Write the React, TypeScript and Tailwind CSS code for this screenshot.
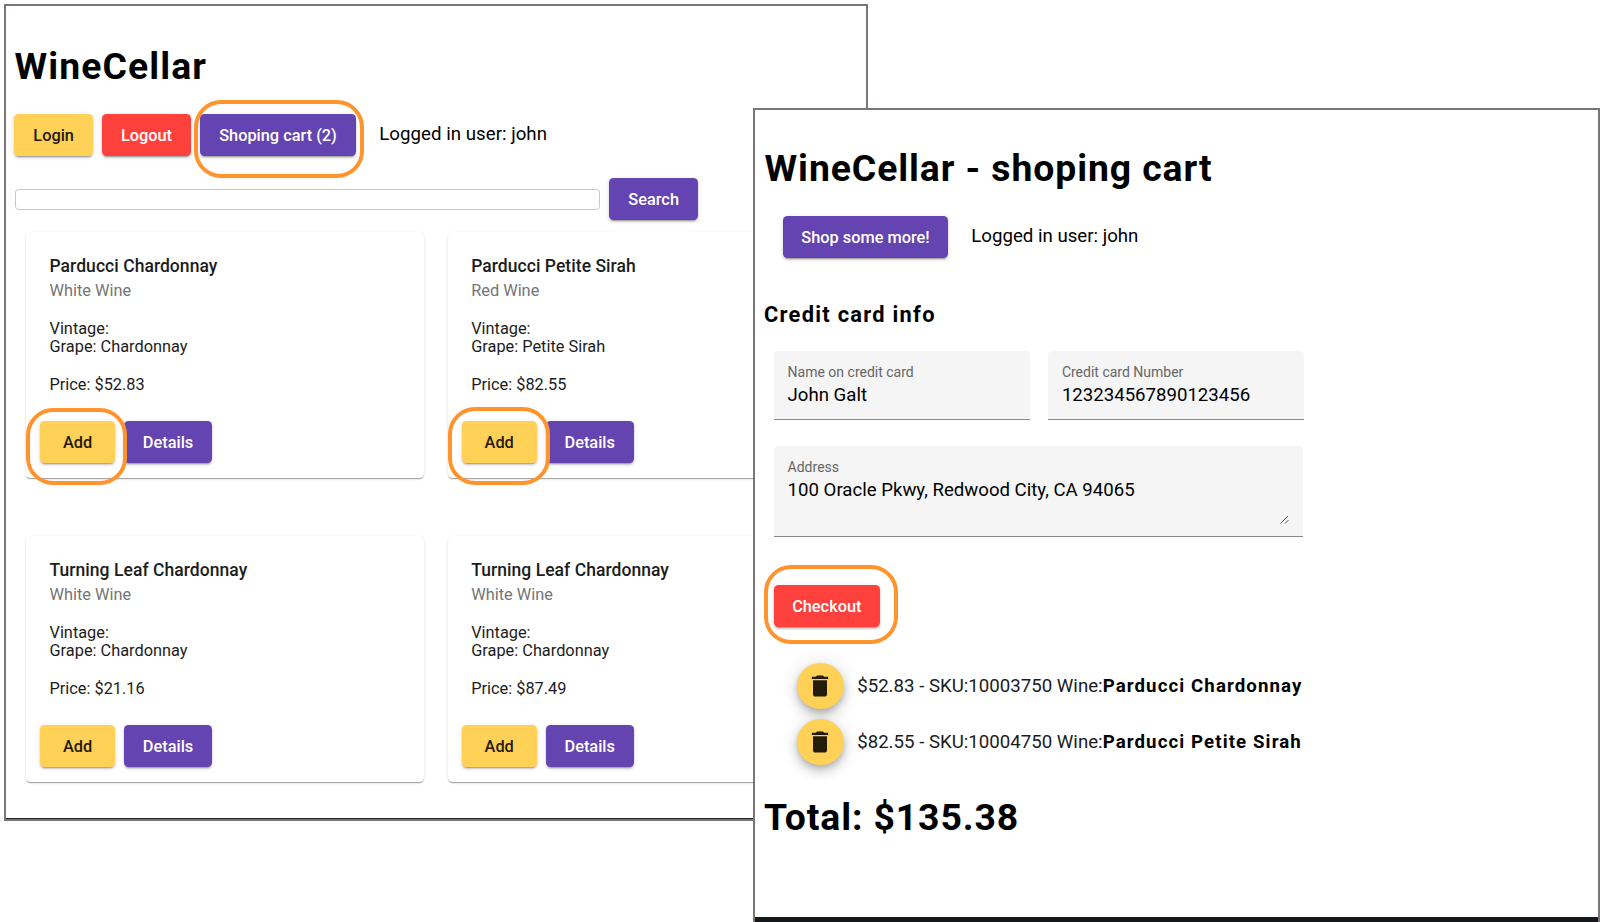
import React from "react";

type Tone = "yellow" | "red" | "purple";

const tones: Record<Tone, string> = {
  yellow: "bg-[#ffd257] text-[#1f1a0a]",
  red: "bg-[#ff413d] text-white",
  purple: "bg-[#6344b0] text-white",
};

function Button({ tone, className, children }: { tone: Tone; className: string; children: React.ReactNode }) {
  return (
    <button
      className={`flex h-[42px] shrink-0 items-center justify-center rounded-[4.5px] pt-[2px] text-[16.33px] font-medium whitespace-nowrap shadow-[0_3px_1px_-2px_rgba(0,0,0,.2),0_2px_2px_0_rgba(0,0,0,.14),0_1px_5px_0_rgba(0,0,0,.12)] ${tones[tone]} ${className}`}
    >
      {children}
    </button>
  );
}

function Highlight({ className }: { className: string }) {
  return <div className={`pointer-events-none absolute z-10 rounded-[27px] border-4 border-[#ff942e] ${className}`} />;
}

interface Wine {
  name: string;
  type: string;
  grape: string;
  price: string;
  mark?: string;
}

const wines: Wine[] = [
  { name: "Parducci Chardonnay", type: "White Wine", grape: "Chardonnay", price: "$52.83", mark: "left-0 top-[176px] h-[77px] w-[101px]" },
  { name: "Parducci Petite Sirah", type: "Red Wine", grape: "Petite Sirah", price: "$82.55", mark: "left-0 top-[175px] h-[78px] w-[102px]" },
  { name: "Turning Leaf Chardonnay", type: "White Wine", grape: "Chardonnay", price: "$21.16" },
  { name: "Turning Leaf Chardonnay", type: "White Wine", grape: "Chardonnay", price: "$87.49" },
];

function WineCard({ wine }: { wine: Wine }) {
  return (
    <div className="relative flex h-[246px] w-[398px] flex-col rounded-[4.5px] bg-white pt-[22px] text-[16.33px] text-[#1c1c1c] shadow-[0_2px_1px_-1px_rgba(0,0,0,.2),0_1px_1px_0_rgba(0,0,0,.14),0_1px_3px_0_rgba(0,0,0,.12)]">
      <div className="px-[23.5px]">
        <h2 className="h-6 text-[17.5px] leading-6 font-medium tracking-[0.05px]">{wine.name}</h2>
        <p className="mt-[2px] h-[22px] leading-[22px] text-[#757575]">{wine.type}</p>
        <p className="mt-[17px] h-[19px] leading-[19px]">Vintage:</p>
        <p className="h-[18px] leading-[18px]">Grape: {wine.grape}</p>
        <p className="mt-[19px] h-[19px] leading-[19px]">Price: {wine.price}</p>
      </div>
      <div className="mt-[27px] flex gap-[9.2px] pl-[14px]">
        <Button tone="yellow" className="w-[75px]">Add</Button>
        <Button tone="purple" className="w-[87.7px]">Details</Button>
      </div>
      {wine.mark && <Highlight className={wine.mark} />}
    </div>
  );
}

function Field({ label, value, className, children }: { label: string; value: string; className: string; children?: React.ReactNode }) {
  return (
    <div className={`relative rounded-t-[4.5px] border-b border-[#8a8a8a] bg-[#f5f5f5] pt-[13px] pl-[13.8px] ${className}`}>
      <div className="h-4 text-[14px] leading-4 text-[#666]">{label}</div>
      <div className="mt-[3px] h-6 text-[18.62px] leading-6 text-black">{value}</div>
      {children}
    </div>
  );
}

const items = [
  { text: "$52.83 - SKU:10003750 Wine:", name: "Parducci Chardonnay" },
  { text: "$82.55 - SKU:10004750 Wine:", name: "Parducci Petite Sirah" },
];

function TrashButton() {
  return (
    <button className="flex size-[46.67px] shrink-0 items-center justify-center rounded-full bg-[#ffd257] shadow-[0_3px_6px_-1px_rgba(0,0,0,.2),0_7px_12px_0_rgba(0,0,0,.14),0_1px_20px_0_rgba(0,0,0,.12)]">
      <svg viewBox="0 0 24 24" className="size-7 fill-[#231c0b]">
        <path d="M6 19c0 1.1.9 2 2 2h8c1.1 0 2-.9 2-2V7H6v12zM19 4h-3.5l-1-1h-5l-1 1H5v2h14V4z" />
      </svg>
    </button>
  );
}

function StoreWindow() {
  return (
    <section className="absolute top-1 left-1 h-[817px] w-[863.5px] overflow-hidden border-2 border-[#7b7577] bg-white">
      <div className="flex h-full flex-col border-b border-[#222]">
        <h1 className="mt-[38px] h-11 pl-[8.5px] text-[37.33px] leading-[44px] font-bold tracking-[1.1px]">WineCellar</h1>
        <div className="relative mt-[26px] flex items-center pl-[8.3px]">
          <Button tone="yellow" className="w-[78.7px]">Login</Button>
          <Button tone="red" className="ml-[9px] w-[89px]">Logout</Button>
          <Button tone="purple" className="ml-[9px] w-[156px]">Shoping cart (2)</Button>
          <span className="ml-[23.3px] pb-[2px] text-[18.67px] leading-10 tracking-[0.03px]">Logged in user: john</span>
          <Highlight className="-top-[14px] left-[187.5px] h-[78px] w-[170.5px]" />
        </div>
        <div className="mt-[22px] flex items-center pl-[9px]">
          <input className="h-[21px] w-[585px] rounded-[3.5px] border border-[#c6c6c6] bg-white" />
          <Button tone="purple" className="ml-[9.3px] w-[88.7px]">Search</Button>
        </div>
        <div className="mt-3 grid grid-cols-[398px_398px] gap-x-[23.7px] gap-y-[58.3px] pl-5">
          {wines.map((w, i) => (
            <WineCard key={i} wine={w} />
          ))}
        </div>
      </div>
    </section>
  );
}

function CartWindow() {
  return (
    <section className="absolute top-[108px] left-[753px] z-20 h-[814px] w-[847px] border-2 border-b-0 border-[#7b7577] bg-white">
      <div className="flex h-full flex-col border-b-[5px] border-[#14181d] pl-[9px]">
        <h1 className="mt-[36px] h-11 pl-[0.5px] text-[37.33px] leading-[44px] font-bold tracking-[0.92px]">WineCellar - shoping cart</h1>
        <div className="mt-[26px] flex items-center pl-[19px]">
          <Button tone="purple" className="w-[165px]">Shop some more!</Button>
          <span className="ml-[23.3px] pb-[2px] text-[18.67px] leading-10">Logged in user: john</span>
        </div>
        <h3 className="mt-[43px] h-7 text-[21.84px] leading-7 font-bold tracking-[1.27px]">Credit card info</h3>
        <div className="mt-[22px] flex gap-[18.3px] pl-[9.8px]">
          <Field label="Name on credit card" value="John Galt" className="h-[69px] w-[256px]" />
          <Field label="Credit card Number" value="123234567890123456" className="h-[69px] w-[256px]" />
        </div>
        <div className="mt-[26px] pl-[9.8px]">
          <Field label="Address" value="100 Oracle Pkwy, Redwood City, CA 94065" className="h-[91px] w-[529px]">
            <svg viewBox="0 0 9 9" className="absolute right-[14px] bottom-[12px] size-[9px] fill-none stroke-[#555]">
              <path d="M0.5 8.5L8 1M5 8.5L8.5 5" />
            </svg>
          </Field>
        </div>
        <div className="relative mt-12 pl-[9.8px]">
          <Button tone="red" className="w-[106px]">Checkout</Button>
          <Highlight className="-top-5 left-0 h-[79px] w-[134px]" />
        </div>
        <ul className="mt-[35.7px] flex flex-col gap-[9.3px] pl-[33px]">
          {items.map((it) => (
            <li key={it.name} className="flex items-center text-[18.67px] whitespace-nowrap text-[#1c1c1c]">
              <TrashButton />
              <span className="ml-[13.5px]">
                {it.text}
                <b className="font-bold tracking-[1.1px] text-black">{it.name}</b>
              </span>
            </li>
          ))}
        </ul>
        <h1 className="mt-[30px] h-11 text-[37.33px] leading-[44px] font-bold tracking-[0.88px]">Total: $135.38</h1>
      </div>
    </section>
  );
}

export default function App() {
  return (
    <main className="relative h-[922px] w-[1600px] overflow-hidden bg-white font-[Roboto,'Liberation_Sans',sans-serif] text-black">
      <StoreWindow />
      <CartWindow />
    </main>
  );
}
